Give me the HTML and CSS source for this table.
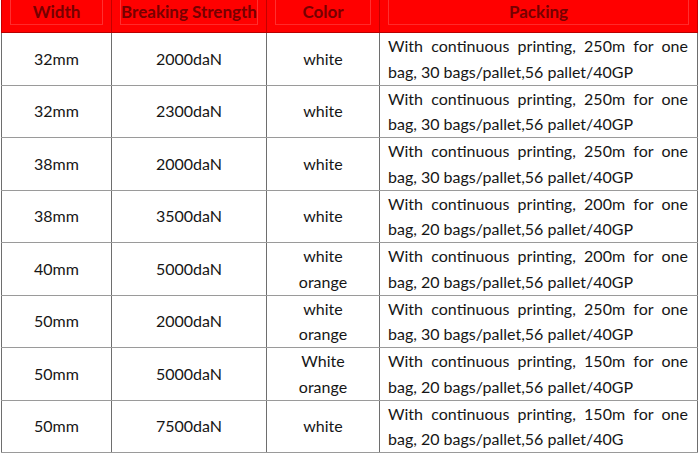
FILE: index.html
```html
<!DOCTYPE html>
<html>
<head>
<meta charset="utf-8">
<link rel="stylesheet" href="styles.css">
</head>
<body>
<table class="spec">
  <colgroup>
    <col class="c-width">
    <col class="c-strength">
    <col class="c-color">
    <col class="c-packing">
  </colgroup>
  <thead>
    <tr>
      <th><div class="hcell">Width</div></th>
      <th><div class="hcell">Breaking Strength</div></th>
      <th><div class="hcell">Color</div></th>
      <th><div class="hcell">Packing</div></th>
    </tr>
  </thead>
  <tbody>
    <tr><td>32mm</td><td>2000daN</td><td>white</td><td class="pack">With continuous printing, 250m for one bag, 30 bags/pallet,56 pallet/40GP</td></tr>
    <tr><td>32mm</td><td>2300daN</td><td>white</td><td class="pack">With continuous printing, 250m for one bag, 30 bags/pallet,56 pallet/40GP</td></tr>
    <tr><td>38mm</td><td>2000daN</td><td>white</td><td class="pack">With continuous printing, 250m for one bag, 30 bags/pallet,56 pallet/40GP</td></tr>
    <tr><td>38mm</td><td>3500daN</td><td>white</td><td class="pack">With continuous printing, 200m for one bag, 20 bags/pallet,56 pallet/40GP</td></tr>
    <tr><td>40mm</td><td>5000daN</td><td>white<br>orange</td><td class="pack">With continuous printing, 200m for one bag, 20 bags/pallet,56 pallet/40GP</td></tr>
    <tr><td>50mm</td><td>2000daN</td><td>white<br>orange</td><td class="pack">With continuous printing, 250m for one bag, 30 bags/pallet,56 pallet/40GP</td></tr>
    <tr><td>50mm</td><td>5000daN</td><td>White<br>orange</td><td class="pack">With continuous printing, 150m for one bag, 20 bags/pallet,56 pallet/40GP</td></tr>
    <tr><td>50mm</td><td>7500daN</td><td>white</td><td class="pack">With continuous printing, 150m for one bag, 20 bags/pallet,56 pallet/40G</td></tr>
  </tbody>
</table>
</body>
</html>
```
FILE: styles.css
```css
html, body {
  margin: 0;
  padding: 0;
  background: #ffffff;
}

body {
  font-family: Lato, "Liberation Sans", sans-serif;
  color: #161616;
}

.spec {
  margin-left: 1px;
  border-collapse: collapse;
  table-layout: fixed;
  width: 696px;
  font-size: 16px;
}

.c-width { width: 110px; }
.c-strength { width: 155px; }
.c-color { width: 113px; }
.c-packing { width: 318px; }

.spec th {
  background: #ff0000;
  color: #760000;
  font-size: 17px;
  font-weight: 700;
  height: 32px;
  padding: 0;
  vertical-align: top;
  border-left: 1px solid #c40000;
  border-right: 1px solid #c40000;
  border-bottom: 1px solid #b80000;
}

.hcell {
  margin: 0 8px;
  height: 24px;
  line-height: 23px;
  border-left: 1px solid #ff3030;
  border-right: 1px solid #ff3030;
  border-bottom: 1px solid #ff2a2a;
  text-align: center;
}

.spec td {
  height: 51.5px;
  padding: 0;
  text-align: center;
  vertical-align: middle;
  line-height: 25.75px;
  border-left: 1px solid #6e6e6e;
  border-right: 1px solid #6e6e6e;
  border-bottom: 1.5px solid #9a9a9a;
}

.spec td.pack {
  text-align: justify;
  padding: 0 9px 0 8px;
}
```
